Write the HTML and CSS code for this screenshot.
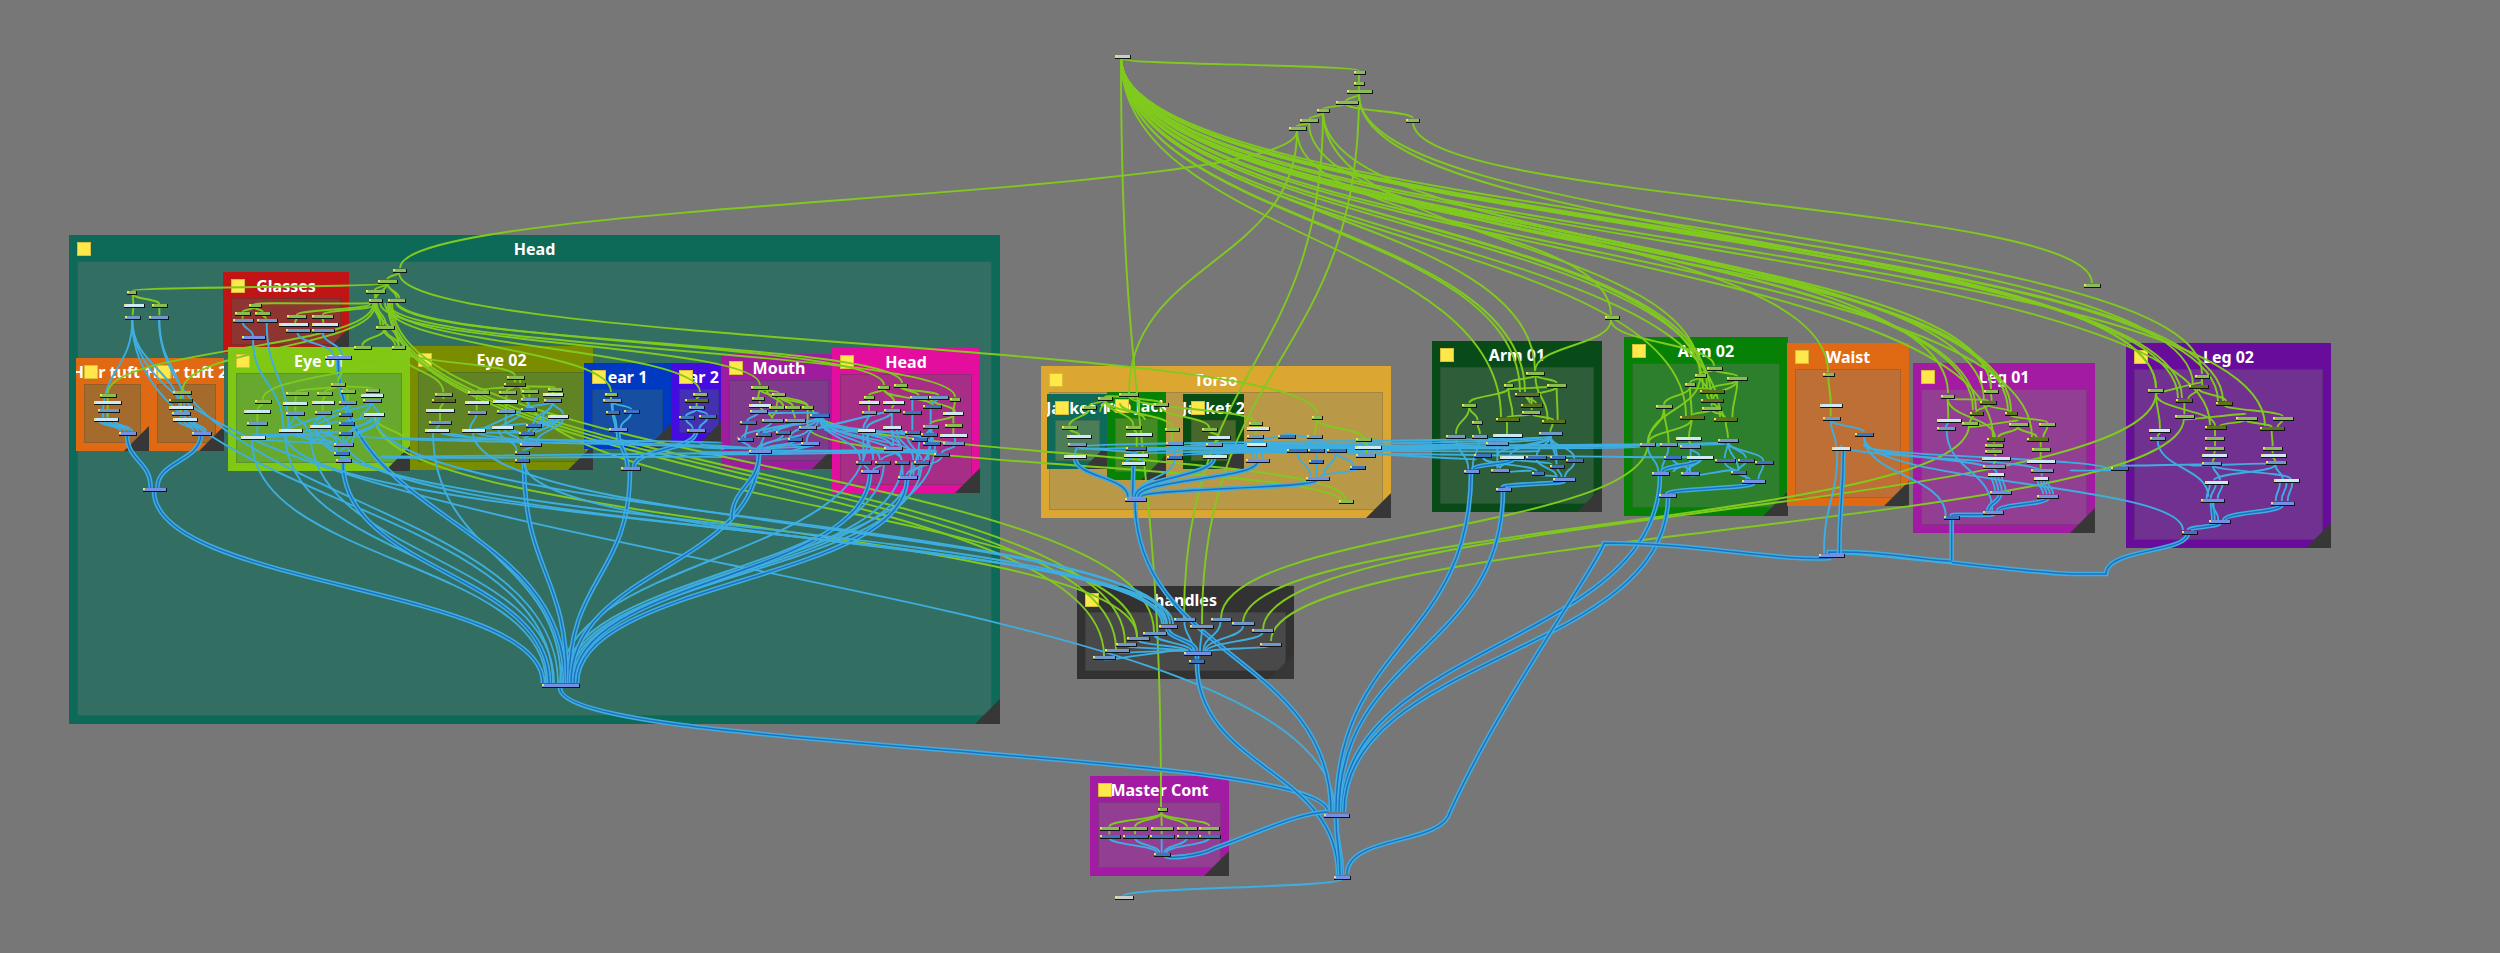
FILE: index.html
```html
<!DOCTYPE html>
<html lang="en">
<head>
  <meta charset="UTF-8">
  <meta name="viewport" content="width=device-width, initial-scale=1.0">
  <title>Node View</title>
  <link rel="stylesheet" href="styles.css">
</head>
<body>
  <div class="canvas">
    <div class="group head-all"><i class="note"></i><h2>Head</h2><div class="inside"></div></div>
    <div class="group glasses"><i class="note"></i><h2>Glasses</h2><div class="inside"></div></div>
    <div class="group tuft1"><i class="note"></i><h2>Hair tuft 1</h2><div class="inside"></div></div>
    <div class="group tuft2"><i class="note"></i><h2>Hair tuft 2</h2><div class="inside"></div></div>
    <div class="group eye1"><i class="note"></i><h2>Eye 01</h2><div class="inside"></div></div>
    <div class="group eye2"><i class="note"></i><h2>Eye 02</h2><div class="inside"></div></div>
    <div class="group ear1"><i class="note"></i><h2>ear 1</h2><div class="inside"></div></div>
    <div class="group ear2"><i class="note"></i><h2>ear 2</h2><div class="inside"></div></div>
    <div class="group mouth"><i class="note"></i><h2>Mouth</h2><div class="inside"></div></div>
    <div class="group head"><i class="note"></i><h2>Head</h2><div class="inside"></div></div>
    <div class="group torso"><i class="note"></i><h2>Torso</h2><div class="inside"></div></div>
    <div class="group jacket1"><i class="note"></i><h2>Jacket 1</h2><div class="inside"></div></div>
    <div class="group jacket"><i class="note"></i><h2>Torso Jacket</h2><div class="inside"></div></div>
    <div class="group jacket2"><i class="note"></i><h2>Jacket 2</h2><div class="inside"></div></div>
    <div class="group handles"><i class="note"></i><h2>handles</h2><div class="inside"></div></div>
    <div class="group master"><i class="note"></i><h2>Master Cont</h2><div class="inside"></div></div>
    <div class="group arm1"><i class="note"></i><h2>Arm 01</h2><div class="inside"></div></div>
    <div class="group arm2"><i class="note"></i><h2>Arm 02</h2><div class="inside"></div></div>
    <div class="group waist"><i class="note"></i><h2>Waist</h2><div class="inside"></div></div>
    <div class="group leg1"><i class="note"></i><h2>Leg 01</h2><div class="inside"></div></div>
    <div class="group leg2"><i class="note"></i><h2>Leg 02</h2><div class="inside"></div></div>
    <svg class="wires" id="wires" width="2500" height="953"></svg>
  </div>
  <script src="script.js"></script>
</body>
</html>
```

FILE: styles.css
```css
body {
  margin: 0;
  background-color: #777777;
  overflow: hidden;
}
.canvas {
  position: relative;
  width: 2500px;
  height: 953px;
  overflow: hidden;
  font-family: "Noto Sans", "Open Sans", sans-serif;
}
.group {
  position: absolute;
  box-sizing: border-box;
  display: flex;
  flex-direction: column;
  padding: 0 8px 8px;
  overflow: hidden;
}
.group h2 {
  flex: none;
  align-self: center;
  margin: 0;
  height: 26px;
  line-height: 29px;
  font-size: 16px;
  font-weight: bold;
  color: #ffffff;
  white-space: nowrap;
}
.inside {
  flex: 1;
  box-sizing: border-box;
  border: 1px solid rgba(0, 0, 0, 0.12);
}
/* resize corner */
.group::after {
  content: "";
  position: absolute;
  right: 0;
  bottom: 0;
  width: 25px;
  height: 25px;
  background-color: #373737;
  clip-path: polygon(100% 0, 100% 100%, 0 100%);
}
.note {
  position: absolute;
  left: 8px;
  top: 7px;
  width: 14px;
  height: 14px;
  box-sizing: border-box;
  background-color: #ffe94a;
  border: 1px solid #d9bd3c;
}
.wires {
  position: absolute;
  left: 0;
  top: 0;
}

/* groups */
.head-all { left: 69px; top: 235px; width: 931px; height: 489px; background-color: #0e6a58; }
.head-all .inside { background-color: #326f62; }
.glasses { left: 223px; top: 272px; width: 126px; height: 81px; background-color: #c11515; }
.glasses .inside { background-color: #8e3431; }
.tuft1 { left: 76px; top: 358px; width: 73px; height: 93px; background-color: #e06a13; }
.tuft2 { left: 149px; top: 358px; width: 75px; height: 93px; background-color: #e06a13; }
.tuft1 .inside, .tuft2 .inside { background-color: #a46b2d; }
.eye1 { left: 228px; top: 347px; width: 182px; height: 124px; background-color: #80c814; }
.eye1 .inside { background-color: #66a92e; }
.eye2 { left: 410px; top: 346px; width: 183px; height: 124px; background-color: #7a8c00; }
.eye2 .inside { background-color: #608323; }
.ear1 { left: 584px; top: 363px; width: 87px; height: 86px; background-color: #003ac2; }
.ear1 .inside { background-color: #164fa2; }
.ear2 { left: 671px; top: 363px; width: 56px; height: 78px; background-color: #440cde; }
.ear2 .inside { background-color: #4431b1; }
.mouth { left: 721px; top: 354px; width: 116px; height: 115px; background-color: #a01c9f; }
.mouth .inside { background-color: #803a8c; }
.head { left: 832px; top: 348px; width: 148px; height: 145px; background-color: #e30d9e; }
.head .inside { background-color: #a72e87; }
.torso { left: 1041px; top: 366px; width: 350px; height: 152px; background-color: #dca731; }
.torso .inside { background-color: #b99847; }
.jacket1 { left: 1047px; top: 394px; width: 61px; height: 75px; background-color: #0f6b59; }
.jacket1 .inside { background-color: #4b7d58; }
.jacket { left: 1107px; top: 392px; width: 59px; height: 88px; background-color: #068206; }
.jacket .inside { background-color: #468a26; }
.jacket2 { left: 1183px; top: 394px; width: 61px; height: 75px; background-color: #094c16; }
.jacket2 .inside { background-color: #48672b; }
.handles { left: 1077px; top: 586px; width: 217px; height: 93px; background-color: #323232; }
.handles .inside { background-color: #494949; }
.master { left: 1090px; top: 776px; width: 139px; height: 100px; background-color: #a41ba3; }
.master .inside { background-color: #923e93; }
.arm1 { left: 1432px; top: 341px; width: 170px; height: 171px; background-color: #084b18; }
.arm1 .inside { background-color: #2e5d3a; }
.arm2 { left: 1624px; top: 337px; width: 164px; height: 179px; background-color: #068106; }
.arm2 .inside { background-color: #2d7e2d; }
.waist { left: 1787px; top: 343px; width: 122px; height: 163px; background-color: #e06a13; }
.waist .inside { background-color: #bd6f35; }
.leg1 { left: 1913px; top: 363px; width: 182px; height: 170px; background-color: #a41ba3; }
.leg1 .inside { background-color: #923e93; }
.leg2 { left: 2126px; top: 343px; width: 205px; height: 205px; background-color: #680c9b; }
.leg2 .inside { background-color: #703190; }

/* connections */
path { fill: none; }
.green { stroke: #80ca1e; stroke-width: 1.9; }
.blue { stroke: #3eaee0; stroke-width: 1.9; }
.cable { stroke: #3eaee0; stroke-width: 4.6; }
.core { stroke: #1f6fc0; stroke-width: 1.5; }

/* nodes */
.shadow { fill: #101418; }
.port { fill: #f4e04a; }
.n-g { fill: #8cba54; }
.n-o { fill: #5c721e; }
.n-w { fill: #cfe9f4; }
.n-s { fill: #7199c8; }
.n-b { fill: #3f74bd; }
.n-c { fill: #7390e2; }
.n-k { fill: #cccccc; }
```

FILE: script.js
```js
// Every cluster has its own origin, inner coordinates are thirds of a pixel.
// node: kind left right y      wire: kind x1 y1 x2 y2
const clusters = [
  { x: 50, y: 220,
    nodes: `g 232 260 216;w 222 282 256;g 305 350 256;s 225 270 290;s 298 356 290;g 150 198 524;w 133 213 547;
      s 145 208 569;w 132 205 597;c 206 256 638;g 370 425 517;o 358 428 540;w 357 430 560;s 366 420 578;
      w 368 440 596;c 426 482 638;c 278 348 807;g 597 632 256;g 556 601 279;g 615 661 279;s 549 608 300;
      s 620 679 300;c 577 645 352;g 711 768 289;g 787 850 288;w 687 775 311;w 785 863 311;s 708 780 331;
      s 785 850 331;c 826 903 410;g 1029 1069 149;g 985 1042 182;g 949 1005 214;g 957 995 239;
      g 1014 1066 239;g 978 1033 320;g 912 962 381;g 1026 1066 381;g 843 886 491;g 614 661 543;g 707 772 520;
      g 802 848 520;g 872 914 514;g 948 987 509;w 583 660 573;w 700 771 549;w 785 851 546;w 934 1001 525;
      s 592 652 609;s 708 763 578;s 795 843 576;s 868 920 545;s 938 991 541;w 574 647 652;w 688 757 631;
      w 780 842 619;w 942 1001 583;b 868 908 583;b 866 910 609;b 868 908 640;c 851 909 673;b 851 897 698;
      c 857 902 720`,
    wires: `g 1010 190 248 212;g 248 220 250 252;g 248 222 328 252;g 250 262 248 286;g 328 262 328 286;
      b 247 296 158 592;b 247 296 392 592;b 328 296 405 592;b 172 575 172 592;b 160 575 160 592;
      b 145 600 212 634;b 158 600 225 634;b 173 600 236 634;b 190 600 246 634;g 173 530 173 592;
      b 383 600 432 634;b 398 600 445 634;b 413 600 456 634;b 428 600 468 634;g 393 522 393 590;
      b 405 560 420 592;d 231 643 302 803;d 453 643 322 803;
      g 970 252 173 520;g 975 254 397 513;g 970 248 613 252;g 960 252 740 285;g 970 256 818 284;
      g 613 262 578 275;g 613 262 638 275;g 578 284 578 296;g 638 284 648 296;
      b 578 306 609 348;b 650 306 715 627;b 609 358 700 627;g 740 294 735 308;g 818 294 820 308;
      b 742 336 850 406;b 818 336 876 406;
      g 1048 155 1012 178;g 1012 190 975 210;g 1012 190 978 235;g 1012 190 1040 235;g 1012 190 1048 235;
      g 975 220 975 235;g 975 248 1000 316;g 980 248 1008 316;g 970 248 992 316;g 1005 326 937 377;
      g 1005 326 1046 377;g 975 250 1046 377;g 1000 326 1036 377;
      g 937 387 865 487;g 1046 387 638 539;g 864 496 738 516;g 864 496 825 516;g 864 496 893 510;g 864 496 967 505;
      g 638 548 622 569;g 738 525 736 545;g 825 525 818 542;g 893 518 893 541;g 967 514 967 521;
      g 622 578 622 605;g 736 553 736 574;g 818 550 818 572;g 975 590 1070 670;
      b 622 614 622 648;b 736 583 715 627;b 736 583 770 627;b 818 581 790 615;b 818 581 838 615;b 893 550 888 580;
      b 965 546 890 580;b 965 546 985 580;b 965 546 930 600;b 965 592 900 640;b 985 592 890 669;
      b 950 592 885 605;b 972 592 905 636;b 990 592 905 669;b 600 640 860 650;b 640 650 868 636;
      b 720 640 860 673;b 810 625 875 669;b 800 628 860 694;b 835 628 860 669;b 740 640 868 605;
      b 700 627 900 560;b 790 615 870 583;b 620 655 855 676;b 745 636 852 694;b 880 645 880 669;
      b 888 678 870 694;b 870 702 876 716` },

  { x: 390, y: 220,
    nodes: `g 350 400 471;o 343 407 491;g 135 186 521;g 233 295 517;g 327 377 517;g 396 444 512;g 473 516 507;
      o 125 194 541;w 108 191 571;w 225 297 545;w 310 383 544;s 394 446 536;w 459 519 522;s 463 515 541;
      s 117 184 606;s 235 288 575;s 320 375 573;b 392 436 568;w 106 179 630;w 216 285 631;w 307 369 622;
      w 474 533 587;b 409 453 616;b 388 434 640;c 391 455 672;b 376 418 696;b 376 418 721;
      g 646 683 521;s 638 692 541;b 649 689 575;b 702 747 572;c 656 711 628;c 693 750 745;
      g 910 953 521;o 885 955 541;s 898 943 562;b 867 912 592;b 928 980 588;c 891 945 630`,
    wires: `g 28 390 375 467;g 28 390 160 517;g 375 475 375 487;g 375 496 262 513;g 375 496 350 513;g 375 496 418 508;
      g 375 496 495 503;g 160 526 160 537;g 160 546 150 567;g 150 575 150 602;g 262 521 260 541;
      g 350 521 348 540;g 418 516 418 532;g 495 511 488 518;g 260 549 260 571;g 348 548 348 569;
      b 150 611 140 626;b 260 580 240 627;b 348 578 346 618;b 418 541 412 564;b 488 546 410 564;b 488 546 520 583;
      b 488 546 430 612;b 488 546 455 600;b 510 592 430 636;b 520 592 440 668;b 490 592 415 636;
      b 505 592 400 668;b 530 592 450 612;b 270 627 395 575;b 250 627 410 612;b 330 618 390 590;b 360 626 390 640;
      b 345 628 395 668;b 245 636 400 640;b 260 636 395 668;b 325 628 380 692;b 430 678 400 692;
      b 150 636 390 672;b 160 636 230 650;b 430 620 470 592;d 400 700 398 717;
      g 663 526 663 537;b 668 546 668 571;b 668 546 724 568;b 668 580 676 624;b 724 577 692 624;b 664 546 680 624;
      d 684 634 712 740;g 930 526 920 537;g 920 546 920 558;b 920 567 888 588;b 920 567 952 584;b 888 597 908 626;
      b 952 593 928 626;d 918 636 732 740;
      b -30 708 1130 700;b -30 712 1000 712;b -100 645 1000 690;b -60 650 1000 670;b 400 650 1000 686` },

  { x: 700, y: 320,
    nodes: `g 154 204 201;g 216 256 222;g 157 193 235;w 147 212 254;g 208 252 262;g 256 301 262;g 307 341 262;
      s 150 200 272;b 329 385 284;s 186 248 299;s 255 314 299;b 119 166 307;s 298 350 322;b 168 214 341;
      b 229 271 337;b 113 157 357;b 265 308 357;c 302 355 370;c 147 212 393;
      g 535 568 201;g 583 622 195;g 492 521 230;w 478 537 247;w 550 613 247;s 630 683 230;s 687 743 230;
      b 669 722 257;g 750 781 236;s 485 528 276;s 552 600 269;b 610 664 276;w 728 788 280;w 474 526 330;
      w 549 603 322;b 614 658 335;s 670 716 317;g 736 786 314;w 721 802 346;b 636 682 358;b 662 709 342;
      c 553 608 383;b 669 719 370;s 729 793 370;b 702 748 403;b 469 514 425;b 526 571 425;b 586 628 425;
      b 643 689 425;c 484 538 454;c 594 650 470`,
    wires: `g 179 206 175 231;g 179 206 236 218;g 179 206 323 258;g 179 240 180 250;g 236 228 230 258;g 236 228 278 258;
      g 236 228 323 258;g 182 260 216 295;g 278 268 285 295;g 323 268 323 318;g 230 268 216 295;
      g 200 210 250 260;
      b 175 277 142 303;b 216 304 175 340;b 285 304 175 353;b 325 327 170 389;b 142 312 135 353;b 175 277 357 280;
      b 357 289 235 333;b 357 289 270 353;b 357 289 320 366;b 357 289 190 337;b 357 289 125 353;
      b 357 289 480 420;b 360 292 540 420;b 365 292 605 420;b 370 295 665 420;b 360 292 575 379;
      b 357 289 600 379;b 370 300 690 366;b 375 330 640 340;b 345 325 575 274;b 320 366 180 389;b 345 375 195 389;
      b 192 345 178 389;b 250 341 180 389;b 288 361 190 389;b 113 350 155 389;b 330 327 575 274;
      b 0 370 170 389;b 0 380 200 389;b 0 395 710 395;b 0 402 710 398;b 190 390 710 392;
      d 177 398 95 600;b 240 400 330 380;
      g 552 206 507 226;g 552 206 582 243;g 602 200 656 226;g 602 200 715 226;g 552 210 700 257;g 765 241 760 276;
      g 507 235 507 243;g 507 252 507 272;g 582 252 576 265;g 690 235 765 276;g 760 285 690 313;g 760 285 760 310;
      g 760 319 760 342;b 507 281 490 326;b 576 274 575 318;b 637 235 637 272;b 715 235 692 253;b 637 281 637 331;
      b 692 262 692 313;b 765 351 765 366;b 576 274 500 326;b 490 336 490 420;b 575 327 600 379;b 575 327 580 379;
      b 600 327 610 340;b 693 322 670 354;b 693 322 695 366;b 637 340 665 354;b 695 322 685 420;
      b 600 388 545 420;b 580 388 605 420;b 658 363 640 466;b 690 375 680 420;b 690 375 655 466;b 765 375 725 399;
      b 725 408 620 466;b 490 430 505 450;b 548 430 520 450;b 607 430 608 466;b 665 430 630 466;b 690 326 700 366;
      b 620 340 655 420;b 655 363 700 340;b 500 336 520 420;b 590 327 640 420` },

  { x: 1020, y: 350,
    nodes: `g 298 354 132;g 234 275 144;g 186 229 171;g 401 442 163;g 126 170 231;g 318 364 231;w 141 214 259;
      w 318 397 253;s 143 198 283;b 318 378 294;w 132 199 318;w 313 385 314;w 306 376 338;g 435 477 237;
      s 438 490 279;b 442 486 321;c 314 376 446;g 546 591 238;w 564 629 262;s 558 606 283;w 548 620 318;
      g 686 724 220;w 681 748 235;s 681 729 258;w 680 737 283;c 678 747 330;b 775 827 258;s 862 908 258;
      g 875 904 200;b 802 862 301;b 865 914 301;b 920 976 301;b 868 911 334;c 858 926 385;g 1008 1052 268;
      w 1006 1085 291;s 1008 1065 314;b 990 1035 351;g 957 998 454`,
    wires: `g 326 138 255 141;g 326 138 422 159;g 255 148 208 168;g 208 175 148 227;g 255 148 340 227;g 255 148 457 233;
      g 255 148 240 185;g 326 138 705 216;g 422 168 568 234;g 148 236 178 255;g 340 236 350 249;g 350 258 350 290;
      g 457 242 457 275;g 568 243 596 258;g 596 266 585 279;g 705 225 712 231;g 712 240 705 254;g 890 205 885 254;
      g 890 208 1030 264;g 1030 273 1042 287;g 1042 296 1038 310;g 300 160 375 210;
      b 170 288 165 314;b 170 288 345 312;b 350 298 350 310;b 340 319 320 334;b 355 319 370 334;b 464 284 464 316;
      b 582 288 590 314;b 705 263 697 280;b 720 263 732 280;b 697 288 697 326;b 710 288 710 326;b 725 288 727 326;
      b 800 248 700 280;b 885 263 800 254;b 885 263 832 297;b 885 263 890 297;b 885 263 948 297;
      b 832 306 872 380;b 890 306 890 330;b 890 339 890 380;b 948 306 910 380;b 948 306 1000 346;b 1010 356 900 380;
      d 165 323 324 440;d 340 343 338 440;b 464 326 350 440;d 582 323 345 440;d 712 335 355 440;d 890 391 365 440` },

  { x: 1050, y: 570,
    nodes: `s 372 435 148;c 326 379 168;s 421 489 168;s 278 346 188;s 230 297 204;s 198 257 222;s 165 236 240;
      s 130 195 262;s 483 543 148;s 547 614 160;s 606 670 181;s 629 692 222;c 401 482 249;b 417 463 272;
      g 323 350 717;g 150 208 775;g 218 291 775;g 303 370 773;g 380 440 775;g 448 508 773;b 150 210 797;
      b 218 293 797;b 300 373 797;b 380 443 797;b 448 510 797;b 312 360 852;c 821 896 734;c 853 902 922;
      k 194 248 982`,
    wires: `b 403 153 430 244;b 456 173 450 244;b 512 153 460 244;b 580 165 465 244;b 638 186 470 244;b 660 227 475 244;
      b 312 193 425 244;b 263 209 415 244;b 228 227 410 244;b 200 246 405 244;b 163 268 405 240;d 352 173 438 244;
      d 441 255 441 268;
      g 334 728 178 770;g 334 728 255 770;g 334 728 335 768;g 334 728 411 770;g 334 728 478 768;
      g 178 780 178 793;g 255 780 255 793;g 335 779 335 793;g 411 780 411 793;g 478 778 478 793;
      b 178 803 320 848;b 255 803 328 848;b 335 803 335 848;b 411 803 343 848;b 478 803 350 848;
      b 875 928 221 977` },

  { x: 1410, y: 310,
    nodes: `g 584 625 20;g 349 404 188;g 282 308 224;g 411 467 224;o 314 385 252;o 334 396 284;g 337 391 307;
      o 257 326 326;o 395 463 334;g 157 200 284;g 187 218 336;s 108 165 377;s 186 232 377;w 250 336 376;
      s 387 457 369;s 228 295 399;b 192 244 436;w 269 341 441;b 347 407 441;b 419 465 441;b 469 520 450;
      b 420 462 467;b 365 400 488;c 162 207 483;c 243 297 479;c 430 495 506;c 257 302 536;
      g 891 935 173;g 855 887 194;g 826 856 222;g 952 1012 203;o 870 943 242;o 872 938 271;g 877 935 293;
      o 810 881 320;o 911 981 326;g 739 787 289;w 797 873 385;s 923 984 389;s 691 736 403;s 751 803 403;
      s 811 871 408;b 763 814 441;w 832 909 441;b 914 975 449;b 985 1033 449;b 1035 1088 457;b 964 1008 485;
      c 727 777 490;c 813 868 490;c 995 1065 513;c 747 799 556`,
    wires: `g 376 195 295 219;g 376 195 440 219;g 376 195 413 330;g 295 235 178 279;g 295 232 308 320;g 295 235 440 232;
      g 178 290 138 372;g 178 290 203 331;g 203 341 210 372;g 440 230 365 262;g 440 230 443 330;g 365 262 365 300;
      g 350 258 378 280;g 348 258 360 280;g 365 312 291 322;g 365 312 430 330;g 291 332 291 372;g 428 340 421 365;
      b 138 382 175 478;b 208 382 187 478;b 262 404 262 475;b 421 376 380 437;b 421 376 441 437;b 421 376 493 446;
      b 421 376 300 437;b 421 376 262 436;b 421 376 440 463;b 380 446 440 501;b 441 472 455 501;b 493 455 465 501;
      b 291 382 262 395;b 305 446 270 475;b 218 440 270 475;b 220 445 380 484;b 378 493 440 501;b 270 484 365 484;
      b 305 446 425 463;d 310 446 190 478;d 462 513 279 531;
      g 913 179 870 190;g 913 179 982 199;g 870 200 840 218;g 870 200 890 238;g 840 230 762 284;g 840 230 845 316;
      g 870 200 715 399;g 982 210 900 238;g 982 210 967 322;g 982 210 910 267;g 840 232 905 238;g 905 247 905 267;
      g 905 276 905 289;g 890 247 940 322;g 905 299 845 316;g 905 299 945 322;g 762 295 713 399;g 762 295 776 399;
      g 845 326 837 381;g 845 326 715 399;g 947 332 954 384;g 837 390 842 404;
      b 713 408 745 486;b 776 408 755 486;b 842 413 868 437;b 842 413 840 486;b 954 395 944 445;b 954 395 1008 445;
      b 954 395 1060 453;b 954 395 842 404;b 788 446 840 486;b 870 446 790 486;b 944 454 1010 508;b 1008 454 985 481;
      b 985 490 1020 508;b 1060 462 1045 508;b 842 496 975 481;b 954 395 985 481;d 870 446 757 486;
      d 1030 519 772 552;b 870 446 830 486` },

  { x: 1780, y: 310,
    nodes: `g 129 163 192;w 120 187 285;s 130 180 323;b 226 279 371;w 155 210 413;c 117 193 735;g 483 523 257;
      w 471 542 331;s 472 526 355;g 612 653 244;o 600 648 276;o 569 607 310;o 675 711 310;g 545 594 340;
      g 686 742 342;g 777 826 342;o 620 671 386;o 740 804 386;g 614 669 404;g 616 666 422;g 757 811 416;
      w 607 690 443;w 742 826 453;s 608 674 467;s 753 819 480;w 625 674 493;w 762 805 503;c 631 693 547;
      c 772 834 558;c 610 671 607;b 493 537 622`,
    wires: `g 145 197 152 281;g 152 290 152 319;b 152 330 252 367;b 152 330 168 409;b 172 418 132 730;d 190 418 178 730;
      b 252 377 497 617;b 182 405 785 485;b 252 400 650 488;b 252 405 990 480;
      g 503 262 505 326;g 503 264 625 272;g 503 264 645 382;g 633 249 635 272;g 625 284 588 306;g 625 284 692 306;
      g 580 315 570 336;g 692 315 802 338;g 568 350 714 333;g 568 346 600 345;g 714 350 655 382;g 714 350 770 382;
      g 802 348 790 382;g 645 392 641 400;g 641 409 641 418;g 641 427 648 439;g 648 448 641 463;g 782 392 782 412;
      g 782 421 782 449;g 782 458 782 476;
      b 505 336 498 351;b 500 360 637 602;b 641 472 650 489;b 785 485 785 499;b 635 498 645 542;b 645 498 655 542;
      b 655 498 665 542;b 665 498 677 542;b 772 508 790 553;b 782 508 800 553;b 790 508 810 553;b 800 508 820 553;
      d 660 552 625 602;d 802 564 655 602;d 640 612 515 617;d 515 627 515 752` },

  { x: 2090, y: 320,
    nodes: `g 175 220 211;g 314 357 168;o 297 355 199;o 259 308 240;o 378 425 248;g 255 311 287;g 438 500 293;
      g 549 609 293;o 345 407 321;o 510 583 325;g 346 404 353;g 346 404 383;g 520 578 383;w 178 242 330;
      s 180 225 354;w 337 413 405;w 514 588 404;s 337 394 429;s 527 586 427;w 346 416 485;w 553 627 481;
      c 333 401 540;c 542 611 548;c 357 421 604;b 275 320 635;b 62 113 443`,
    wires: `g 198 218 210 326;g 198 218 335 188;g 198 222 375 317;g 335 173 337 195;g 325 205 295 236;g 325 205 408 244;
      g 283 245 283 283;g 402 254 578 289;g 283 297 468 283;g 468 300 390 317;g 468 300 545 321;g 578 298 563 321;
      g 375 326 375 349;g 375 358 375 379;g 375 388 373 401;g 545 330 548 379;g 548 388 548 400;g 548 409 556 423;
      g 373 410 368 425;g 210 335 203 350;
      b 203 359 355 530;b 368 434 390 481;b 368 434 602 477;b 556 434 372 481;b 556 434 578 477;
      b 360 490 350 536;b 378 490 362 536;b 398 490 383 536;b 570 486 557 543;b 590 486 575 543;b 607 486 593 543;
      b 366 545 372 600;d 366 545 370 600;b 366 545 385 600;d 575 554 403 600;d 388 610 297 630;
      b 90 435 360 435;b 300 435 556 432;b -60 450 88 452` },

  { x: 1080, y: 30,
    nodes: `k 104 149 79;g 821 855 127;g 821 851 158;g 801 877 184;g 767 833 217;g 711 747 240;g 661 716 271;
      g 627 677 293;g 979 1019 269;g 3013 3060 765`,
    wires: `g 126 86 837 122;g 837 130 837 155;g 837 162 837 181;g 837 192 798 213;g 798 222 730 236;g 798 222 998 264;
      g 730 248 688 267;g 688 278 650 289` }
];

// Connections that run between clusters, in pixels.
const longWires = `g 1121 58 1161 807;g 1297 131 400 268;g 1297 131 1129 393;g 1323 112 1184 618;g 1359 95 1202 624;
  g 1413 122 2092 283;g 1297 131 1611 315;g 1309 123 1991 389;g 1323 112 1700 374;g 1323 112 1991 389;
  g 1359 95 2202 374;g 1359 95 2156 388;g 1611 320 1535 371;g 1611 320 1714 366;
  g 1121 58 1501 417;g 1121 58 1520 392;g 1121 58 1525 392;g 1121 58 1535 371;g 1121 58 1686 416;g 1121 58 1703 388;
  g 1121 58 1707 388;g 1121 58 1711 397;g 1121 58 1720 417;g 1121 58 1828 372;g 1121 58 1948 393;g 1121 58 1973 410;
  g 1121 58 1976 410;g 1121 58 1984 400;g 1121 58 2008 411;g 1121 58 2011 411;g 1121 58 1993 437;g 1121 58 2032 437;
  g 1121 58 2156 388;g 1121 58 2178 398;g 1121 58 2182 398;g 1121 58 2193 385;g 1121 58 2218 401;g 1121 58 2223 401;
  g 1121 58 2210 425;g 1121 58 2265 426;
  g 399 273 1317 414;g 396 300 884 385;g 396 302 902 383;g 388 303 955 397;g 380 303 760 385;g 385 303 611 392;
  g 388 303 700 392;g 388 303 1104 656;g 388 303 1116 649;g 390 303 1125 643;g 392 303 1154 632;g 375 417 1137 637;
  g 520 380 1137 637;g 813 410 1345 499;g 808 427 1345 504;
  g 1648 443 1221 618;g 1969 425 1243 623;g 2156 393 1263 630;g 2184 418 1271 641;
  b 252 440 546 683;b 285 433 550 683;b 310 430 554 683;b 132 319 553 683;b 159 319 558 683;b 433 432 561 683;
  b 132 319 1335 812;b 868 435 560 683;b 884 462 563 683;b 902 462 566 683;b 912 462 569 683;b 922 462 572 683;
  b 935 446 575 683;d 154 491 543 683;d 343 462 549 683;d 338 358 565 683;d 524 462 567 683;d 630 470 569 683;
  d 759 452 571 683;d 870 472 574 683;d 907 478 577 683;
  b 285 433 1162 624;b 315 428 1164 624;b 375 416 1167 624;b 345 440 1166 624;b 473 432 1170 624;b 524 462 1173 624;
  b 1864 437 2183 530;
  b 1550 436 1077 447;b 1550 436 1134 453;b 1550 437 1215 456;b 1728 442 1077 450;b 1728 442 1134 455;
  b 1497 447 1077 449;b 1476 459 1190 444;b 1640 447 1240 450;b 1690 457 1190 452;b 1380 442 1170 447;
  b 1480 446 1180 456;b 1540 451 1140 450;b 1728 444 1300 447;
  d 1135 500 1331 812;d 560 688 1328 812;d 1471 472 1336 812;d 1503 490 1339 812;d 1660 475 1342 812;
  d 1668 497 1344 812;d 1197 663 1338 875;d 1336 817 1342 875;d 1336 817 1340 875`;

// Cables with bends of their own.
const bentCables = [
  'M1165 855C1165 860 1200 856 1215 848C1260 832 1300 812 1328 812',
  'M1831 558C1780 562 1700 543 1604 543C1601 560 1500 700 1450 812C1442 845 1347 835 1347 874',
  'M2188 533C2188 553 2106 548 2106 574L2072 574C2010 572 1890 552 1829 552V556',
  'M1952 561C1920 561 1890 551 1835 552'
];

const svg = document.getElementById('wires');
const parse = text => text.split(';').map(item => item.trim().split(/\s+/));

function draw(tag, cls, attrs) {
  const el = document.createElementNS('http://www.w3.org/2000/svg', tag);
  el.setAttribute('class', cls);
  for (const key in attrs) el.setAttribute(key, attrs[key]);
  svg.appendChild(el);
}

function drawWire(kind, d) {
  if (kind === 'd') {
    draw('path', 'cable', { d });
    draw('path', 'core', { d });
  } else {
    draw('path', kind === 'g' ? 'green' : 'blue', { d });
  }
}

function curve(x1, y1, x2, y2) {
  const pull = Math.max((y2 - y1) / 2, 2);
  return `M${x1} ${y1}C${x1} ${y1 + pull} ${x2} ${y2 - pull} ${x2} ${y2}`;
}

function drawNode(kind, left, right, y) {
  const x = Math.round(left), w = Math.round(right - left), top = Math.round(y) - 1;
  draw('rect', 'shadow', { x, y: top, width: w + 1, height: 4 });
  draw('rect', 'n-' + kind, { x, y: top, width: w, height: 3 });
  draw('rect', 'port', { x, y: top, width: 2, height: 2 });
}

parse(longWires).forEach(([kind, ...p]) => drawWire(kind, curve(...p.map(Number))));
bentCables.forEach(d => drawWire('d', d));
clusters.forEach(c => {
  parse(c.wires).forEach(([kind, x1, y1, x2, y2]) => {
    drawWire(kind, curve(c.x + x1 / 3, c.y + y1 / 3, c.x + x2 / 3, c.y + y2 / 3));
  });
});
clusters.forEach(c => {
  parse(c.nodes).forEach(([kind, l, r, y]) => drawNode(kind, c.x + l / 3, c.x + r / 3, c.y + y / 3));
});
// wide mixer under the big head group
drawNode('c', 542, 579, 685);
```
